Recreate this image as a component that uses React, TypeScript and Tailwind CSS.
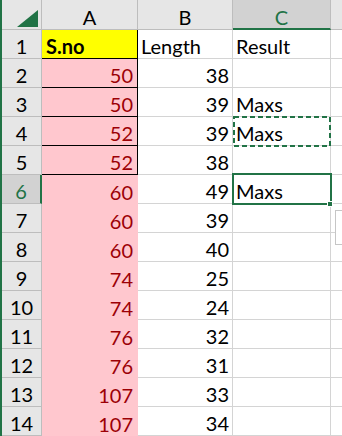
import React from "react";

const rows: { a: string; b: string; c: string }[] = [
  { a: "S.no", b: "Length", c: "Result" },
  { a: "50", b: "38", c: "" },
  { a: "50", b: "39", c: "Maxs" },
  { a: "52", b: "39", c: "Maxs" },
  { a: "52", b: "38", c: "" },
  { a: "60", b: "49", c: "Maxs" },
  { a: "60", b: "39", c: "" },
  { a: "60", b: "40", c: "" },
  { a: "74", b: "25", c: "" },
  { a: "74", b: "24", c: "" },
  { a: "76", b: "32", c: "" },
  { a: "76", b: "31", c: "" },
  { a: "107", b: "33", c: "" },
  { a: "107", b: "34", c: "" },
];

const cols = "grid grid-cols-[40px_96px_95px_98px_1fr]";

export default function App() {
  return (
    <div className="flex h-[436px] w-[342px] overflow-hidden bg-white font-['Lato',sans-serif] text-[20px] leading-none text-black">
      <div className="w-[2px] shrink-0 bg-[#217346]" />
      <div className="relative flex-1">
        <div className={`${cols} h-[30px] grid-rows-[30px] bg-[#e6e6e6]`}>
          <div className="flex items-end justify-end border-b border-r border-[#bdbdbd] pb-[2px] pr-[3px]">
            <svg width="21" height="17" viewBox="0 0 21 17">
              <polygon points="21,0 21,17 0,17" fill="#217346" />
            </svg>
          </div>
          <div className="flex justify-center border-b border-r border-[#bdbdbd] pt-[7px]">A</div>
          <div className="flex justify-center border-b border-r border-[#bdbdbd] pt-[7px]">B</div>
          <div className="flex justify-center border-b-2 border-r border-b-[#217346] border-r-[#bdbdbd] bg-[#d2d2d2] pt-[7px] text-[#217346]">
            C
          </div>
          <div className="border-b border-[#bdbdbd]" />
        </div>
        {rows.map((r, i) => {
          const n = i + 1;
          const active = n === 6;
          const boxed = n <= 5;
          const aCls =
            n === 1
              ? "bg-[#ffff00] font-bold justify-start pl-[4px] border-b border-r border-black"
              : boxed
                ? "bg-[#ffc7ce] text-[#9c0006] justify-end pr-[4px] border-b border-r border-black"
                : "bg-[#ffc7ce] text-[#9c0006] justify-end pr-[5px]";
          return (
            <div key={n} className={`${cols} h-[29px] grid-rows-[29px]`}>
              <div
                className={`flex justify-center border-b border-[#bdbdbd] pt-[6px] ${
                  active ? "border-r-2 border-r-[#217346] bg-[#d2d2d2] text-[#217346]" : "border-r bg-[#e6e6e6]"
                }`}
              >
                {n}
              </div>
              <div className={`flex items-end pb-[2px] ${aCls}`}>{r.a}</div>
              <div
                className={`flex items-end border-b border-r border-[#d4d4d4] pb-[2px] ${
                  n === 1 ? "justify-start pl-[3px]" : "justify-end pr-[3px]"
                }`}
              >
                {r.b}
              </div>
              <div className="flex items-end border-b border-r border-[#d4d4d4] pb-[2px] pl-[3px]">{r.c}</div>
              <div className="border-b border-[#d4d4d4]" />
            </div>
          );
        })}

        {/* copy marquee on C4 */}
        <svg className="absolute left-[231px] top-[116px]" width="98" height="31" viewBox="0 0 98 31">
          <rect x="1" y="1" width="96" height="29" fill="none" stroke="#217346" strokeWidth="2" strokeDasharray="5 3" />
        </svg>

        {/* active cell C6 */}
        <div className="absolute left-[230px] top-[173px] h-[32px] w-[100px] border-2 border-[#217346]" />
        <div className="absolute left-[325px] top-[201px] h-[6px] w-[6px] border border-white bg-[#217346]" />

        {/* paste options edge */}
        <div className="absolute left-[333px] top-[210px] h-[35px] w-[20px] border border-[#c6c6c6] bg-white" />
      </div>
    </div>
  );
}
